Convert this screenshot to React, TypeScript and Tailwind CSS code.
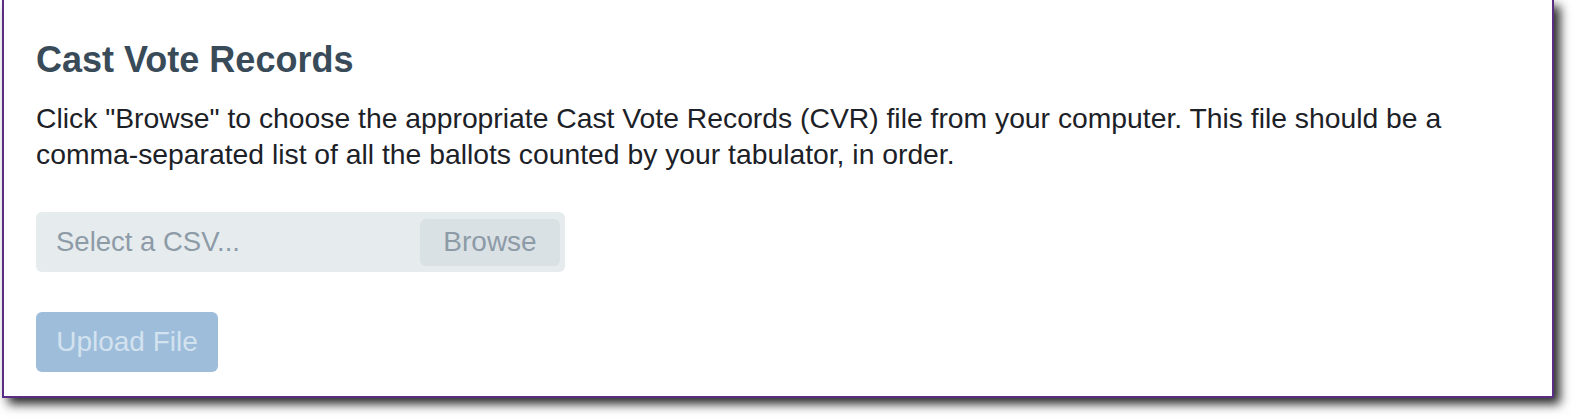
export default function App() {
  return (
    <div className="w-[1576px] h-[420px] bg-white overflow-hidden" style={{ fontFamily: '"Liberation Sans", Arial, sans-serif' }}>
      <div className="ml-[2px] w-[1552px] h-[398px] bg-white border-2 border-t-0 border-[#5b2d84] shadow-[6px_6px_10px_rgba(0,0,0,0.85)] pl-[32px] pt-[39px]">
        <h2 className="text-[36px] leading-[42px] font-bold text-[#394b59]">Cast Vote Records</h2>
        <p className="mt-[19px] text-[28.3px] leading-[36px] text-[#1c2127] max-w-[1470px]">
          Click "Browse" to choose the appropriate Cast Vote Records (CVR) file from your computer. This file should be a comma&#8209;separated list of all the ballots counted by your tabulator, in order.
        </p>
        <div className="mt-[40px] w-[529px] h-[60px] rounded-md bg-[#e6ebee] flex items-center justify-between pl-[20px] pr-[5px]">
          <span className="text-[27.5px] text-[#8d9ba7]">Select a CSV...</span>
          <span className="w-[140px] h-[47px] rounded-md bg-[#dae1e5] flex items-center justify-center text-[28px] text-[#8d9ba7]">Browse</span>
        </div>
        <button disabled className="mt-[40px] w-[182px] h-[60px] rounded-md bg-[#9dbddb] text-[28px] text-[#d3e2ef] flex items-center justify-center">
          Upload File
        </button>
      </div>
    </div>
  );
}
